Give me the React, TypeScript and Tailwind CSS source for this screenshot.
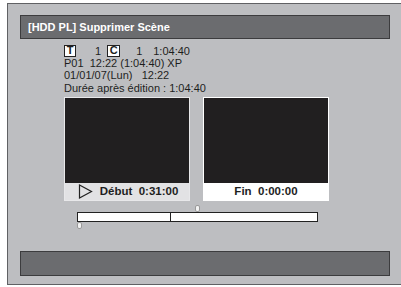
export default function App() {
    return (
        <div className="w-[401px] h-[287px] bg-white overflow-hidden pt-[3px] pl-[7px]" style={{ fontFamily: '"Liberation Sans", Arial, sans-serif' }}>
            <div className="h-[282px] border-l border-t border-b border-[#606164] bg-[#bdbec1] flex flex-col">
                {/* title */}
                <div className="ml-[12px] mt-[11px] w-[370px] h-[24px] bg-[#6b6c6f] border border-[#3c3c3e] flex items-center pl-[7px]">
                    <span className="text-white font-bold text-[11px]">[HDD PL] Supprimer Scène</span>
                </div>

                {/* info */}
                <div className="ml-[56px] mt-[5px] text-[11px] leading-[12px] text-[#1e1e1e]">
                    <div className="flex items-center h-[13px]">
                        <span className="w-[12px] h-[12px] border border-[#222] bg-white flex items-center justify-center font-bold text-[11px] leading-none">T</span>
                        <span className="ml-[19px]">1</span>
                        <span className="ml-[6px] w-[13px] h-[12px] border border-[#222] bg-white flex items-center justify-center font-bold text-[11px] leading-none">C</span>
                        <span className="ml-[16px]">1</span>
                        <span className="ml-[11px]">1:04:40</span>
                    </div>
                    <div className="whitespace-pre">P01  12:22 (1:04:40) XP</div>
                    <div className="whitespace-pre">01/01/07(Lun)   12:22</div>
                    <div className="mt-[1px]">Durée après édition : 1:04:40</div>
                </div>

                {/* previews */}
                <div className="ml-[56px] mt-[3px] flex gap-[13px]">
                    <div className="w-[126px] border border-[#e8e8ea] flex flex-col">
                        <div className="h-[85px] bg-[#211f20]" />
                        <div className="h-[17px] bg-[#e2e2e4] flex items-center justify-center gap-[7px] text-[11.5px] font-bold text-[#1e1e1e]">
                            <svg width="15" height="15" viewBox="0 0 15 15" className="ml-[2px]">
                                <path d="M1.5 1 L13.5 7.5 L1.5 14 Z" fill="none" stroke="#222" strokeWidth="1.2" />
                            </svg>
                            <span className="whitespace-pre">Début  0:31:00</span>
                        </div>
                    </div>
                    <div className="w-[126px] border border-white flex flex-col">
                        <div className="h-[85px] bg-[#211f20]" />
                        <div className="h-[17px] bg-white flex items-center justify-center text-[11.5px] font-bold text-[#1e1e1e]">
                            <span className="whitespace-pre">Fin  0:00:00</span>
                        </div>
                    </div>
                </div>

                {/* timeline */}
                <div className="ml-[69px] mt-[4px] relative w-[241px] h-[26px]">
                    <div className="absolute left-[118px] top-[0px] w-[5px] h-[7px] rounded-[2px] bg-[#f2f2f2] border border-[#9a9a9a]" />
                    <div className="absolute left-0 top-[7px] w-[241px] h-[10px] bg-white border border-[#222]">
                        <div className="absolute left-[92px] top-0 bottom-0 w-px bg-[#222]" />
                    </div>
                    <div className="absolute left-0 top-[17px] w-[5px] h-[7px] rounded-[2px] bg-[#f2f2f2] border border-[#9a9a9a]" />
                </div>

                {/* bottom bar */}
                <div className="ml-[12px] mt-[20px] w-[370px] h-[25px] bg-[#6b6c6f] border border-[#3c3c3e]" />
            </div>
        </div>
    );
}
